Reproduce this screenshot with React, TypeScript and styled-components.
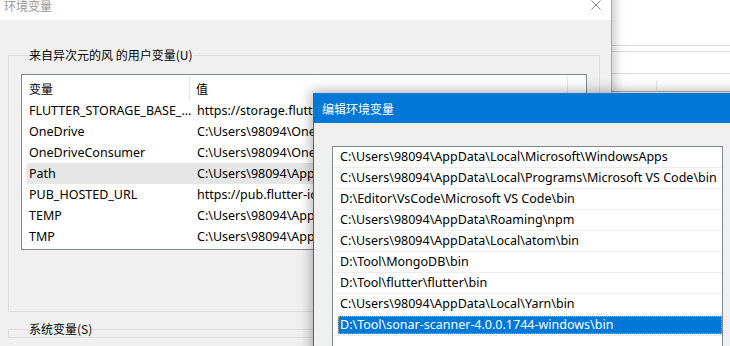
import styled, { createGlobalStyle } from "styled-components"

const GlobalStyle = createGlobalStyle`
  html, body {
    margin: 0;
    padding: 0;
    background: #f0f0f0;
  }
  * {
    box-sizing: border-box;
  }
`

const Desktop = styled.div`
  position: relative;
  width: 730px;
  height: 346px;
  overflow: hidden;
  background: #f0f0f0;
  font-family: "Noto Sans", "Noto Sans CJK SC", sans-serif;
  font-size: 12.5px;
  color: #000;
`

/* 뒤쪽 창 (오른쪽) */
const SideWindow = styled.div`
  position: absolute;
  left: 600px;
  top: 0;
  width: 200px;
  height: 120px;
  background: #fff;
  display: flex;
  flex-direction: column;
  padding-top: 45px;
`

const SideLine = styled.div<{ $gap: number }>`
  height: 1px;
  background: #dadada;
  margin-bottom: ${p => p.$gap}px;
`

const SideHeader = styled.div`
  height: 18px;
  display: flex;
  border-bottom: 1px solid #b8b8b8;
  padding-top: 7px;
`

const SideHeaderCell = styled.div<{ $width: number }>`
  width: ${p => p.$width}px;
  border-right: 1px solid #e5e5e5;
`

/* 환경변수 창 */
const EnvWindow = styled.div`
  position: absolute;
  left: 0;
  top: -10px;
  width: 612px;
  height: 400px;
  background: #f0f0f0;
  border-right: 1px solid #a9a9a9;
  box-shadow: 2px 0 10px 1px rgba(0, 0, 0, 0.22);
  display: flex;
  flex-direction: column;
`

const TitleBar = styled.div<{ $active?: boolean }>`
  height: 30px;
  flex: none;
  display: flex;
  align-items: center;
  justify-content: space-between;
  padding: 0 9px 0 4px;
  background: ${p => (p.$active ? "#0078d7" : "#ffffff")};
  color: ${p => (p.$active ? "#ffffff" : "#999999")};
  font-family: "Noto Sans CJK SC", sans-serif;
  font-size: 12px;
`

const CloseIcon = styled.svg`
  display: block;
  margin-right: 1px;
`

const EnvBody = styled.div`
  flex: 1;
  padding: 0 11px 0 8px;
`

const Group = styled.fieldset<{ $top: number }>`
  margin: ${p => p.$top}px 0 0;
  padding: 0 12px;
  border: 1px solid #dcdcdc;
  min-width: 0;
`

const GroupLabel = styled.legend`
  margin-left: 7px;
  padding: 0 1px;
  line-height: 16px;
  height: 16px;
  font-family: "Noto Sans CJK SC", sans-serif;
  font-size: 12px;
`

const VarList = styled.div`
  margin: 11px 0 61px;
  height: 176px;
  background: #fff;
  border: 1px solid #828790;
  overflow: hidden;
`

const VarHeader = styled.div`
  display: flex;
  height: 25px;
  font-family: "Noto Sans CJK SC", sans-serif;
  font-size: 12px;
`

const HeadCell = styled.div<{ $width: number; $pad: number }>`
  width: ${p => p.$width}px;
  flex: none;
  padding-left: ${p => p.$pad}px;
  line-height: 25px;
  margin-top: 1px;
  border-right: 1px solid #e5e5e5;
  white-space: nowrap;
`

const VarRow = styled.div<{ $selected?: boolean }>`
  display: flex;
  height: 21px;
  margin-left: 5px;
  line-height: 21px;
  background: ${p => (p.$selected ? "#e6e6e6" : "transparent")};
  white-space: nowrap;
`

const VarCell = styled.div<{ $width?: number; $pad: number }>`
  width: ${p => (p.$width ? `${p.$width}px` : "auto")};
  flex: none;
  padding-left: ${p => p.$pad}px;
  overflow: hidden;
`

/* 편집 창 */
const EditDialog = styled.div`
  position: absolute;
  left: 313px;
  top: 93px;
  width: 500px;
  height: 300px;
  background: #f0f0f0;
  border: 1px solid #0078d7;
  box-shadow: 0 0 12px 2px rgba(0, 0, 0, 0.3);
  display: flex;
  flex-direction: column;
`

const EditTitle = styled(TitleBar)`
  height: 29px;
  padding-left: 8px;
`

const EditBody = styled.div`
  padding: 23px 0 0 18px;
`

const PathList = styled.div`
  width: 391px;
  background: #fff;
  border: 1px solid #828790;
  height: 220px;
  overflow: hidden;
`

const PathRow = styled.div<{ $selected?: boolean }>`
  height: 21px;
  border-bottom: 1px solid #ededed;
  padding: ${p => (p.$selected ? "1px 0 1px 5px" : "0 0 0 7px")};
  line-height: 20px;
  white-space: nowrap;
`

const SelectedText = styled.div`
  height: 18px;
  line-height: 16px;
  padding-left: 1px;
  background: #0078d7;
  color: #fff;
  border: 1px dotted #f5a04a;
`

const vars = [
  ["FLUTTER_STORAGE_BASE_...", "https://storage.flutter-io.cn"],
  ["OneDrive", "C:\\Users\\98094\\OneDrive"],
  ["OneDriveConsumer", "C:\\Users\\98094\\OneDrive"],
  ["Path", "C:\\Users\\98094\\AppData\\Local\\Microsoft\\WindowsApps;"],
  ["PUB_HOSTED_URL", "https://pub.flutter-io.cn"],
  ["TEMP", "C:\\Users\\98094\\AppData\\Local\\Temp"],
  ["TMP", "C:\\Users\\98094\\AppData\\Local\\Temp"],
]

const paths = [
  "C:\\Users\\98094\\AppData\\Local\\Microsoft\\WindowsApps",
  "C:\\Users\\98094\\AppData\\Local\\Programs\\Microsoft VS Code\\bin",
  "D:\\Editor\\VsCode\\Microsoft VS Code\\bin",
  "C:\\Users\\98094\\AppData\\Roaming\\npm",
  "C:\\Users\\98094\\AppData\\Local\\atom\\bin",
  "D:\\Tool\\MongoDB\\bin",
  "D:\\Tool\\flutter\\flutter\\bin",
  "C:\\Users\\98094\\AppData\\Local\\Yarn\\bin",
  "D:\\Tool\\sonar-scanner-4.0.0.1744-windows\\bin",
]

export default function App() {
  return (
    <Desktop>
      <GlobalStyle />
      <SideWindow>
        <SideLine $gap={5} />
        <SideLine $gap={21} />
        <SideLine $gap={0} />
        <SideHeader>
          <SideHeaderCell $width={57} />
        </SideHeader>
      </SideWindow>

      <EnvWindow>
        <TitleBar>
          <span>环境变量</span>
          <CloseIcon width="10" height="10" viewBox="0 0 10 10">
            <path d="M0.5 0.5 L9.5 9.5 M9.5 0.5 L0.5 9.5" stroke="#8a8a8a" strokeWidth="1" fill="none" />
          </CloseIcon>
        </TitleBar>
        <EnvBody>
          <Group $top={27}>
            <GroupLabel>来自异次元的风 的用户变量(U)</GroupLabel>
            <VarList>
              <VarHeader>
                <HeadCell $width={168} $pad={7}>变量</HeadCell>
                <HeadCell $width={378} $pad={6}>值</HeadCell>
              </VarHeader>
              {vars.map(([name, value]) => (
                <VarRow key={name} $selected={name === "Path"}>
                  <VarCell $width={164} $pad={2}>{name}</VarCell>
                  <VarCell $pad={6}>{value}</VarCell>
                </VarRow>
              ))}
            </VarList>
          </Group>
          <Group $top={9}>
            <GroupLabel>系统变量(S)</GroupLabel>
          </Group>
        </EnvBody>
      </EnvWindow>

      <EditDialog>
        <EditTitle $active>
          <span>编辑环境变量</span>
        </EditTitle>
        <EditBody>
          <PathList>
            {paths.map((p, i) =>
              i === paths.length - 1 ? (
                <PathRow key={p} $selected>
                  <SelectedText>{p}</SelectedText>
                </PathRow>
              ) : (
                <PathRow key={p}>{p}</PathRow>
              )
            )}
          </PathList>
        </EditBody>
      </EditDialog>
    </Desktop>
  )
}
